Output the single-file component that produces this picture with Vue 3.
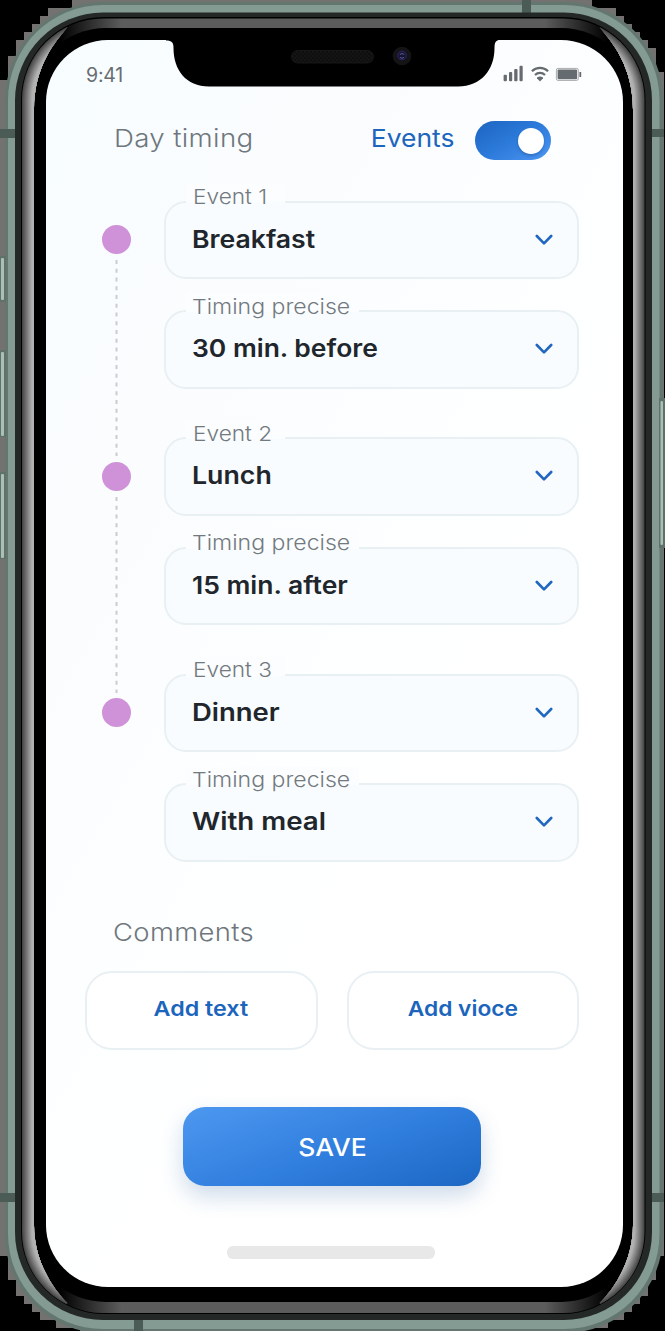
<script setup>
import { ref } from 'vue'

const eventsOn = ref(true)

const events = ref([
  { name: 'Event 1', meal: 'Breakfast', mealClass: 'w-breakfast', timing: '30 min. before', timingClass: 'w-before' },
  { name: 'Event 2', meal: 'Lunch', mealClass: 'w-lunch', timing: '15 min. after', timingClass: 'w-after' },
  { name: 'Event 3', meal: 'Dinner', mealClass: 'w-dinner', timing: 'With meal', timingClass: 'w-with' }
])

// concentric strokes of the polished side bezel, dark outside to bright inside
const rings = Array.from({ length: 12 }, (_, i) => {
  const v = Math.min(178, 72 + i * 11)
  return { i, color: `rgb(${v},${v},${v})` }
})
</script>

<template>
  <div class="phone">
    <svg class="frame" width="665" height="1331" viewBox="0 0 665 1331" aria-hidden="true">
      <defs>
        <linearGradient id="topBand" x1="0" x2="1" y1="0" y2="0">
          <stop offset="0.06" stop-color="#000" />
          <stop offset="0.16" stop-color="#5c5c5c" />
          <stop offset="0.84" stop-color="#5c5c5c" />
          <stop offset="0.94" stop-color="#000" />
        </linearGradient>
        <clipPath id="sides">
          <path d="M20 110V60L60 20L67.5 27.5C55 42 34 66 34 110V1225C34 1262 54 1290 67.5 1303L60 1312L20 1280Z" />
          <path d="M647 110V60L607 20L599.5 27.5C612 42 633 66 633 110V1225C633 1262 613 1290 599.5 1303L607 1312L647 1280Z" />
        </clipPath>
      </defs>
      <rect width="665" height="1331" fill="#000" />
      <path
        fill="#747271"
        d="M72 0H592V8H616V16H624V24H632V32H640V40H648V48H656V72H664V1256H656V1280H648V1296H640V1304H632V1312H624V1320H608V1328H584V1331H80V1328H56V1320H40V1312H32V1304H24V1296H16V1280H8V1256H0V80H8V56H16V40H24V32H32V24H40V16H48V8H72Z"
      />
      <rect x="5" y="2" width="658" height="1331" rx="98" fill="#63766f" />
      <rect x="8" y="5" width="651.5" height="1324" rx="95" fill="#839b93" />
      <g fill="#4b5b55">
        <rect x="522" y="0" width="9" height="13" />
        <rect x="0" y="129" width="16" height="9" />
        <rect x="651" y="129" width="13" height="8" />
        <rect x="0" y="1193" width="16" height="9" />
        <rect x="651" y="1193" width="13" height="9" />
        <rect x="134" y="1320" width="9" height="11" />
      </g>
      <g fill="#5f7169">
        <rect x="0" y="256" width="6" height="46" />
        <rect x="0" y="350" width="6" height="87" />
        <rect x="0" y="472" width="6" height="87" />
        <rect x="659" y="398" width="6" height="150" />
      </g>
      <g fill="#a9c0b7">
        <rect x="1" y="258" width="3" height="42" rx="1" />
        <rect x="1" y="352" width="3" height="84" rx="1" />
        <rect x="1" y="474" width="3" height="84" rx="1" />
        <rect x="660.5" y="401" width="2.5" height="144" rx="1" />
      </g>
      <rect x="15" y="12.5" width="637" height="1307.5" rx="88" fill="#242827" />
      <rect x="21" y="17" width="624.5" height="1297" rx="83" fill="#000" />
      <rect x="22" y="18.5" width="622.5" height="1294.5" rx="81" fill="url(#topBand)" />
      <rect x="30" y="28" width="607" height="1274" rx="76" fill="#000" />
      <g clip-path="url(#sides)">
        <rect
          v-for="r in rings"
          :key="r.i"
          :x="22 + r.i"
          :y="18.5 + r.i"
          :width="622.5 - 2 * r.i"
          :height="1294.5 - 2 * r.i"
          :rx="81 - r.i"
          :fill="r.color"
        />
      </g>
    </svg>

    <main class="screen">
      <header class="status">
        <span class="time">9:41</span>
        <svg class="status-icons" width="80" height="18" viewBox="0 0 80 18" aria-hidden="true">
          <g fill="#666b6f">
            <rect x="1.6" y="9.8" width="3.3" height="6.4" rx="1" />
            <rect x="7" y="7" width="3.2" height="9.2" rx="1" />
            <rect x="12.2" y="4" width="3.3" height="12.2" rx="1" />
            <rect x="17.5" y="0.7" width="3.2" height="15.5" rx="1" />
            <path d="M35 12.6Q38 10.4 41 12.6V13.2L38 16.4L35 13.2Z" />
            <rect x="55.6" y="4.6" width="19.5" height="9.6" rx="1" />
            <rect x="77.4" y="7" width="1.8" height="5" />
          </g>
          <g fill="none" stroke="#666b6f">
            <path d="M29.9 6.3C34.5 1.8 41.5 1.8 46.1 6.3" stroke-width="2.2" />
            <path d="M33 10C35.9 7.2 40.1 7.2 43 10" stroke-width="2.2" />
            <rect x="54.4" y="3.4" width="21.9" height="12" rx="1.6" stroke="#a8abad" />
          </g>
        </svg>
      </header>

      <section class="heading">
        <h1 class="title w-title">Day timing</h1>
        <span class="events-label">Events</span>
        <button
          class="toggle"
          :class="{ off: !eventsOn }"
          role="switch"
          :aria-checked="eventsOn"
          aria-label="Events"
          @click="eventsOn = !eventsOn"
        >
          <span class="knob"></span>
        </button>
      </section>

      <section class="schedule">
        <div v-for="(e, i) in events" :key="e.name" class="row">
          <div class="rail">
            <span class="dot"></span>
            <svg v-if="i < events.length - 1" class="dashes" width="3" height="196" aria-hidden="true">
              <line x1="1.5" y1="0" x2="1.5" y2="196" stroke="#cbcbd0" stroke-width="2" stroke-dasharray="4 4.75" />
            </svg>
          </div>
          <div class="fields">
            <div class="field">
              <span class="label label-event"><span class="label-text">{{ e.name }}</span></span>
              <span class="value" :class="e.mealClass">{{ e.meal }}</span>
              <svg class="chevron" width="18" height="12" viewBox="0 0 18 12" aria-hidden="true">
                <path d="M1.8 2L9 9.3L16.2 2" />
              </svg>
            </div>
            <div class="field">
              <span class="label label-timing"><span class="label-text">Timing precise</span></span>
              <span class="value" :class="e.timingClass">{{ e.timing }}</span>
              <svg class="chevron" width="18" height="12" viewBox="0 0 18 12" aria-hidden="true">
                <path d="M1.8 2L9 9.3L16.2 2" />
              </svg>
            </div>
          </div>
        </div>
      </section>

      <section class="comments">
        <h2 class="title comments-title"><span class="w-comments">Comments</span></h2>
        <div class="comment-actions">
          <button class="outline"><span class="w-add-text">Add text</span></button>
          <button class="outline"><span class="w-add-voice">Add vioce</span></button>
        </div>
      </section>

      <button class="save"><span class="w-save">SAVE</span></button>
      <div class="home-bar"></div>
    </main>

    <svg class="notch" width="332" height="48" viewBox="0 0 332 48" aria-hidden="true">
      <defs>
        <pattern id="mesh" width="4" height="4" patternUnits="userSpaceOnUse">
          <rect width="4" height="4" fill="#151515" />
          <rect width="2" height="2" fill="#0e0e0e" />
          <rect x="2" y="2" width="2" height="2" fill="#0e0e0e" />
        </pattern>
      </defs>
      <path d="M0 0V1.5C6 1.5 7.5 3.5 7.5 9C7.5 31 20 47.5 43 47.5H292C315 47.5 328.5 31 328.5 9C328.5 3.5 330 1.5 332 1.5V0Z" fill="#000" />
      <rect x="125.5" y="11.5" width="82" height="12.5" rx="6.2" fill="url(#mesh)" stroke="#171717" />
      <circle cx="236" cy="17" r="9.3" fill="#141416" />
      <circle cx="236" cy="16.5" r="4.3" fill="#171433" stroke="#2b2768" />
      <path d="M233.8 15.4Q236 13.8 238.2 15.4M234 18.5Q236 20 238 18.5" fill="none" stroke="#5c5a92" />
    </svg>
  </div>
</template>

<style>
body {
  margin: 0;
  background: #000;
}
</style>

<style scoped>
.phone {
  position: relative;
  width: 665px;
  height: 1331px;
  overflow: hidden;
  box-sizing: border-box;
  padding: 40px 42px 44px 46px;
  font-family: Inter, "Liberation Sans", sans-serif;
}
.frame {
  position: absolute;
  left: 0;
  top: 0;
}
.notch {
  position: absolute;
  left: 166px;
  top: 38.5px;
}
.screen {
  position: relative;
  box-sizing: border-box;
  width: 577px;
  height: 1247px;
  border-radius: 62px;
  background: linear-gradient(120deg, #f7fdff 0%, #fbfcfe 28%, #feffff 55%, #fff 70%);
  display: flex;
  flex-direction: column;
  overflow: hidden;
}
button {
  font-family: inherit;
  cursor: pointer;
  padding: 0;
}
.status {
  height: 80px;
  flex: none;
  box-sizing: border-box;
  display: flex;
  justify-content: space-between;
  padding: 23px 41px 0 40px;
}
.time {
  font-size: 19.5px;
  line-height: 24px;
  color: #686d71;
  letter-spacing: -0.2px;
}
.status-icons {
  margin-top: 2px;
  overflow: visible;
}
.heading {
  height: 41px;
  flex: none;
  display: flex;
  align-items: center;
  padding: 0 72px 0 68px;
}
.title,
.events-label {
  margin: 0;
  font-size: 24.5px;
  line-height: 30px;
  font-weight: 300;
  color: #6f777d;
  letter-spacing: 0.3px;
}
.heading .title,
.events-label {
  margin-top: -5px;
}
.events-label {
  margin-left: auto;
  margin-right: 21px;
  color: #1d66be;
  font-weight: 400;
  letter-spacing: 0;
  transform: scaleX(1.08);
  transform-origin: right;
}
.toggle {
  width: 76px;
  height: 39px;
  border: 0;
  border-radius: 20px;
  background: linear-gradient(150deg, #1f69c6 10%, #2c7ada 50%, #4791ef 90%);
  display: flex;
  align-items: center;
  justify-content: flex-end;
  padding: 0 7px;
}
.toggle.off {
  justify-content: flex-start;
  background: #c9d3dd;
}
.knob {
  width: 26px;
  height: 26px;
  border-radius: 50%;
  background: #fff;
  box-shadow: 0 2px 3px rgba(10, 50, 110, 0.3);
}
.schedule {
  padding: 39.5px 44px 0 56px;
  flex: none;
}
.row {
  display: flex;
  height: 236.5px;
}
.rail {
  width: 29px;
  margin-right: 32.5px;
  display: flex;
  flex-direction: column;
  align-items: center;
}
.dot {
  flex: none;
  width: 29px;
  height: 29px;
  border-radius: 50%;
  background: #cf92d9;
  margin-top: 24.5px;
}
.dashes {
  flex: none;
  margin-top: 6px;
}
.fields {
  flex: 1;
  display: flex;
  flex-direction: column;
  gap: 31px;
}
.field {
  position: relative;
  box-sizing: border-box;
  height: 78.5px;
  flex: none;
  border: 2px solid #e9f0f3;
  border-radius: 22px;
  background: #f9fcff;
  display: flex;
  align-items: center;
  justify-content: space-between;
  padding: 0 24.5px 0 26.5px;
}
.label {
  position: absolute;
  left: 20px;
  top: -18.5px;
  box-sizing: border-box;
  padding-left: 7px;
  white-space: nowrap;
  font-size: 20.6px;
  line-height: 25px;
  font-weight: 300;
  color: #727a80;
  background: linear-gradient(#fcfdff 74%, #f9fcff 74%);
}
.label-text {
  display: inline-block;
  transform-origin: left;
}
.label-event {
  width: 99px;
}
.label-event .label-text {
  transform: scaleX(1.1);
}
.label-timing {
  width: 173px;
  padding-left: 6px;
}
.label-timing .label-text {
  transform: scaleX(1.12);
}
.value {
  font-size: 24.3px;
  line-height: 30px;
  margin-top: -2px;
  font-weight: 600;
  color: #20262c;
  white-space: nowrap;
  transform-origin: left;
}
.w-title {
  transform: scaleX(1.13);
  transform-origin: left;
}
.w-breakfast {
  transform: scaleX(1.095);
}
.w-before {
  transform: scaleX(1.088);
}
.w-lunch {
  transform: scaleX(1.1);
}
.w-after {
  transform: scaleX(1.09);
}
.w-dinner {
  transform: scaleX(1.13);
}
.w-with {
  transform: scaleX(1.14);
}
.w-comments {
  display: inline-block;
  transform: scaleX(1.12);
  transform-origin: left;
}
.w-add-text,
.w-add-voice,
.w-save {
  display: inline-block;
  transform: scaleX(1.13);
}
.w-add-voice {
  transform: scaleX(1.105);
}
.w-save {
  transform: scaleX(1.09);
}
.chevron {
  fill: none;
  stroke: #1f67c0;
  stroke-width: 2.6;
  stroke-linecap: round;
  stroke-linejoin: round;
}
.comments {
  margin-top: 7px;
  padding: 0 44px 0 39px;
  flex: none;
}
.comments-title {
  padding-left: 28px;
}
.comment-actions {
  margin-top: 24px;
  display: flex;
  gap: 29px;
}
.outline {
  flex: 1;
  height: 78.5px;
  box-sizing: border-box;
  border: 2px solid #e9f0f3;
  border-radius: 27px;
  background: #fff;
  color: #1b65bd;
  font-size: 20.6px;
  font-weight: 600;
  padding-bottom: 3px;
}
.save {
  flex: none;
  width: 298px;
  height: 79px;
  margin: 57px 0 0 137px;
  border: 0;
  border-radius: 22px;
  background: linear-gradient(160deg, #4d98f0 0%, #2f7ddd 55%, #1c67c3 100%);
  box-shadow: 0 10px 22px rgba(30, 90, 160, 0.22);
  color: #fff;
  font-size: 24.3px;
  font-weight: 500;
  padding-top: 2px;
}
.home-bar {
  flex: none;
  width: 208px;
  height: 12.5px;
  margin: 60.5px 0 0 181px;
  border-radius: 6px;
  background: #e8e8e8;
}
</style>
